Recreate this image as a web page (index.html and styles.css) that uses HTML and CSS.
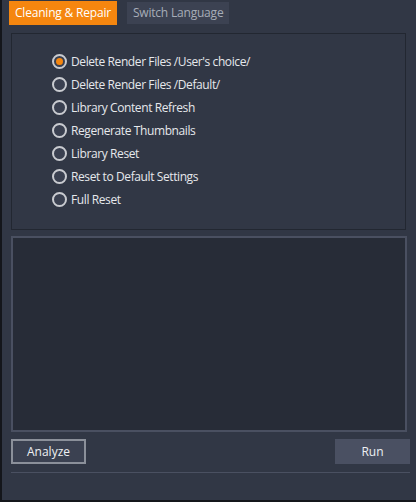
FILE: index.html
```html
<!DOCTYPE html>
<html>
<head>
<meta charset="utf-8">
<link rel="stylesheet" href="styles.css">
</head>
<body>
<div class="window">
  <div class="tabs">
    <div class="tab active">Cleaning &amp; Repair</div>
    <div class="tab">Switch Language</div>
  </div>
  <div class="content">
    <div class="group">
      <ul class="options">
        <li class="option checked"><span class="radio"></span>Delete Render Files /User's choice/</li>
        <li class="option"><span class="radio"></span>Delete Render Files /Default/</li>
        <li class="option"><span class="radio"></span>Library Content Refresh</li>
        <li class="option"><span class="radio"></span>Regenerate Thumbnails</li>
        <li class="option"><span class="radio"></span>Library Reset</li>
        <li class="option"><span class="radio"></span>Reset to Default Settings</li>
        <li class="option"><span class="radio"></span>Full Reset</li>
      </ul>
    </div>
    <div class="log"></div>
    <div class="buttons">
      <button class="btn analyze">Analyze</button>
      <button class="btn run">Run</button>
    </div>
    <div class="rule"></div>
  </div>
</div>
</body>
</html>
```
FILE: styles.css
```css
html, body {
  margin: 0;
  padding: 0;
  background: #14161b;
}
.window {
  width: 414px;
  height: 500px;
  margin-left: 2px;
  background: #313745;
  font-family: "Open Sans", "Noto Sans", sans-serif;
  font-size: 12px;
  color: #e6e8ec;
  display: flex;
  flex-direction: column;
}
.tabs {
  display: flex;
  align-items: flex-start;
  gap: 10px;
  padding: 1px 0 0 7px;
  height: 32px;
  box-sizing: border-box;
}
.tab {
  height: 22px;
  line-height: 22px;
  padding: 0 6px;
  margin-top: 1px;
  background: #3c4252;
  color: #a7adb8;
  letter-spacing: -0.2px;
}
.tab.active {
  height: 24px;
  line-height: 24px;
  margin-top: 0;
  background: #f5860f;
  color: #ffffff;
}
.content {
  padding: 1px 6px 0 9px;
  display: flex;
  flex-direction: column;
}
.group {
  width: 395px;
  height: 197px;
  box-sizing: border-box;
  border: 1px solid #222731;
  padding: 18px 0 0 40px;
}
.options {
  list-style: none;
  margin: 0;
  padding: 0;
  display: flex;
  flex-direction: column;
  gap: 5px;
}
.option {
  display: flex;
  align-items: center;
  gap: 4px;
  height: 18px;
  letter-spacing: -0.4px;
}
.radio {
  width: 15px;
  height: 15px;
  box-sizing: border-box;
  border: 2px solid #c9cbd0;
  border-radius: 50%;
  background: #3a4050;
  display: flex;
  align-items: center;
  justify-content: center;
}
.option.checked .radio::after {
  content: "";
  width: 7px;
  height: 7px;
  border-radius: 50%;
  background: #f5860f;
}
.log {
  margin-top: 6px;
  width: 396px;
  height: 196px;
  box-sizing: border-box;
  border: 2px solid #4a5061;
  background: #272c37;
}
.buttons {
  display: flex;
  justify-content: space-between;
  margin-top: 7px;
  width: 399px;
}
.btn {
  width: 75px;
  height: 25px;
  font-family: inherit;
  font-size: 12px;
  color: #eef0f3;
  padding: 0;
  box-sizing: border-box;
}
.analyze {
  background: #3b4151;
  border: 2px solid #8b909a;
}
.run {
  background: #4a5062;
  border: none;
}
.rule {
  margin-top: 8px;
  width: 399px;
  height: 1px;
  background: #4a5061;
}
```
